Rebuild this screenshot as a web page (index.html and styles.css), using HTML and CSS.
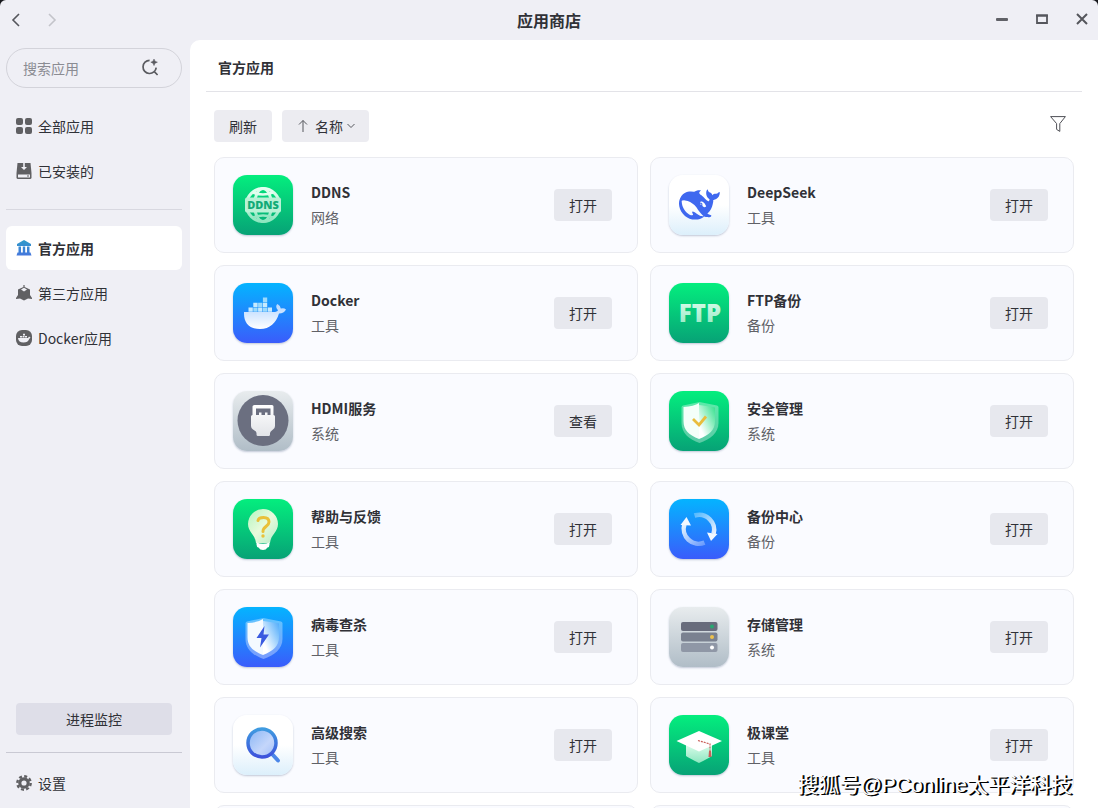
FILE: index.html
```html
<!DOCTYPE html>
<html lang="zh-CN">
<head>
    <meta charset="UTF-8">
    <meta name="viewport" content="width=device-width, initial-scale=1.0">
    <title>应用商店</title>
    <link rel="stylesheet" href="styles.css">
</head>
<body>
    <!-- shared gradients -->
    <svg class="defs" width="0" height="0" aria-hidden="true">
        <defs>
            <linearGradient id="mint" x1="0" y1="0" x2="0" y2="1">
                <stop offset="0" stop-color="#e4fff0"/>
                <stop offset="1" stop-color="#8ee6c0"/>
            </linearGradient>
            <linearGradient id="whale" x1="0" y1="0" x2="0" y2="1">
                <stop offset="0" stop-color="#b5d6ff"/>
                <stop offset="1" stop-color="#ffffff"/>
            </linearGradient>
            <linearGradient id="plug" x1="0" y1="0" x2="0" y2="1">
                <stop offset="0" stop-color="#ffffff"/>
                <stop offset="1" stop-color="#e2e4e8"/>
            </linearGradient>
            <linearGradient id="bulb" x1="0" y1="0" x2="1" y2="1">
                <stop offset="0" stop-color="#b4f5c0"/>
                <stop offset="0.5" stop-color="#e8fbdc"/>
                <stop offset="1" stop-color="#b5ecc9"/>
            </linearGradient>
            <linearGradient id="greenHalf" x1="0" y1="1" x2="1" y2="0">
                <stop offset="0.2" stop-color="#ffffff"/>
                <stop offset="1" stop-color="#32e08c"/>
            </linearGradient>
            <linearGradient id="blueHalf" x1="0" y1="1" x2="1" y2="0">
                <stop offset="0.2" stop-color="#ffffff"/>
                <stop offset="1" stop-color="#4aa9fb"/>
            </linearGradient>
            <linearGradient id="ring" x1="0" y1="0" x2="0" y2="1">
                <stop offset="0" stop-color="#3f9be0"/>
                <stop offset="1" stop-color="#3d52dc"/>
            </linearGradient>
            <linearGradient id="lens" x1="0" y1="0" x2="1" y2="1">
                <stop offset="0" stop-color="#86b4f5"/>
                <stop offset="0.6" stop-color="#c4d6fb"/>
                <stop offset="1" stop-color="#9fbdf8"/>
            </linearGradient>
            <linearGradient id="arcRight" x1="0" y1="0" x2="1" y2="1">
                <stop offset="0" stop-color="#ffffff" stop-opacity="0.3"/>
                <stop offset="1" stop-color="#ffffff" stop-opacity="0.9"/>
            </linearGradient>
            <linearGradient id="arcLeft" x1="1" y1="1" x2="0" y2="0">
                <stop offset="0" stop-color="#ffffff" stop-opacity="0.3"/>
                <stop offset="1" stop-color="#ffffff" stop-opacity="0.9"/>
            </linearGradient>
            <linearGradient id="bank" x1="0" y1="0" x2="0" y2="1">
                <stop offset="0" stop-color="#2f9bc9"/>
                <stop offset="1" stop-color="#4577dd"/>
            </linearGradient>
        </defs>
    </svg>

    <div class="window">
        <header class="titlebar">
            <div class="history">
                <button class="icon-btn" aria-label="后退">
                    <svg width="16" height="16" viewBox="0 0 16 16" fill="none" stroke="#55565c" stroke-width="1.6"><path d="M11 2L5 8L11 14"/></svg>
                </button>
                <button class="icon-btn" aria-label="前进">
                    <svg width="16" height="16" viewBox="0 0 16 16" fill="none" stroke="#c3c4ca" stroke-width="1.6"><path d="M5 2L11 8L5 14"/></svg>
                </button>
            </div>
            <h1>应用商店</h1>
            <div class="window-controls">
                <button class="icon-btn" aria-label="最小化">
                    <svg width="16" height="16" viewBox="0 0 16 16"><rect x="2" y="6" width="12" height="3" rx="1" fill="#606167"/></svg>
                </button>
                <button class="icon-btn" aria-label="最大化">
                    <svg width="16" height="16" viewBox="0 0 16 16" fill="none" stroke="#55565c"><path d="M3 3V11H13V3" stroke-width="1.800"/><path d="M2.100 3.500H13.900" stroke-width="2.400"/></svg>
                </button>
                <button class="icon-btn" aria-label="关闭">
                    <svg width="16" height="16" viewBox="0 0 16 16" fill="none" stroke="#55565c" stroke-width="2"><path d="M3 2L13 12M13 2L3 12"/></svg>
                </button>
            </div>
        </header>

        <aside class="sidebar">
            <div class="search">
                <input type="text" placeholder="搜索应用" aria-label="搜索应用">
                <svg width="18" height="18" viewBox="0 0 18 18" fill="none" stroke="#5a5b60" stroke-width="1.7"><path d="M8.600 1.300A6.600 6.600 0 1 0 15.200 8.600M12.800 12.200L16.600 16"/><path d="M13 0L14 2.200L16.400 3.200L14 4.200L13 6.600L12 4.200L9.800 3.200L12 2.200Z" fill="#5a5b60" stroke="#5a5b60" stroke-width=".5"/></svg>
            </div>

            <nav>
                <a href="#" class="nav-item">
                    <svg width="16" height="16" viewBox="0 0 16 16" fill="#606063"><rect width="7" height="7" rx="2"/><rect x="9" width="7" height="7" rx="2"/><rect y="9" width="7" height="7" rx="2"/><rect x="9" y="9" width="7" height="7" rx="2"/></svg>
                    全部应用
                </a>
                <a href="#" class="nav-item">
                    <svg width="16" height="16" viewBox="0 0 16 16"><path d="M1.5 0H14.5L15.5 10V14.5Q15.5 16 14 16H2Q.5 16 .5 14.5V10Z" fill="#606063"/><path d="M7.2 0H8.8V4H11L8 7L5 4H7.2Z" fill="#f0f0f6"/><path d="M2 11.5H14V14.5H2Z" fill="#f0f0f6"/><rect x="11" y="12.5" width="2" height="1" fill="#606063"/></svg>
                    已安装的
                </a>
                <hr>
                <a href="#" class="nav-item active">
                    <svg width="16" height="16" viewBox="0 0 16 16" fill="url(#bank)"><path d="M8 0L15 4V6H1V4ZM2.5 6.5H5V13H2.5ZM6.8 6.5H9.2V13H6.8ZM11 6.5H13.5V13H11ZM1.5 12.6H14.5L15.5 15.5H.5Z"/></svg>
                    官方应用
                </a>
                <a href="#" class="nav-item">
                    <svg width="16" height="16" viewBox="0 0 16 16"><path d="M7.4 0H8.6V2L14 4.5V10L16 13V14L12 13.4L8 15.6L4 13.4L0 14V13L2 10V4.5L7.4 2Z" fill="#606063"/><path d="M8 2.8L11 4.6L8 6.4L5 4.6Z" fill="#efeff5"/></svg>
                    第三方应用
                </a>
                <a href="#" class="nav-item">
                    <svg width="16" height="16" viewBox="0 0 16 16"><rect width="16" height="16" rx="6" fill="#606063"/><path d="M2 8H12L13 6.5L14.5 7.5L13.2 9Q12 12.5 7.5 12.5Q2.5 12.5 2 8ZM4 6H6V7.4H4ZM6.5 6H8.5V7.4H6.5ZM9 6H11V7.4H9ZM7 3.8H9V5.5H7Z" fill="#f0f0f6"/></svg>
                    Docker应用
                </a>
            </nav>

            <div class="sidebar-bottom">
                <button class="monitor-btn">进程监控</button>
                <hr>
                <a href="#" class="nav-item">
                    <svg width="16" height="16" viewBox="0 0 16 16" fill="none" stroke="#606063"><circle cx="8" cy="8" r="4.2" stroke-width="3.2"/><circle cx="8" cy="8" r="6.7" stroke-width="2.4" stroke-dasharray="3 2.26"/></svg>
                    设置
                </a>
            </div>
        </aside>

        <main class="content">
            <h2>官方应用</h2>
            <div class="toolbar">
                <button class="tool-btn">刷新</button>
                <div class="sort">
                    <svg width="12" height="14" viewBox="0 0 12 14" fill="none" stroke="#55565c"><path d="M6 13V1.5M2 5.5L6 1.5L10 5.5"/></svg>
                    <select aria-label="排序">
                        <option>名称</option>
                    </select>
                    <svg width="8" height="8" viewBox="0 0 8 8" fill="none" stroke="#55565c"><path d="M.5 2L4 5.5L7.500 2"/></svg>
                </div>
                <button class="icon-btn filter" aria-label="筛选">
                    <svg width="16" height="16" viewBox="0 0 16 16" fill="none" stroke="#4e4f55" stroke-linejoin="round"><path d="M.6 .6H15.400L9.800 7.600V15.400L6.600 13.400V7.600Z"/></svg>
                </button>
            </div>

            <ul class="apps">
                <li class="card">
                    <svg class="app-icon green" viewBox="0 0 60 60">
                        <g fill="none" stroke="url(#mint)" stroke-width="3"><circle cx="30" cy="30" r="16.500"/><ellipse cx="30" cy="30" rx="8.500" ry="16.500"/><path d="M20 17.500Q30 21.500 40 17.500M20 42.500Q30 38.500 40 42.500" stroke-width="2.500"/></g>
                        <rect x="12" y="22.500" width="36" height="15" rx="2" fill="#b8f2d6"/>
                        <text class="ddns-text" x="30" y="34" text-anchor="middle">DDNS</text>
                    </svg>
                    <div class="info"><h3>DDNS</h3><p>网络</p></div>
                    <button class="open-btn">打开</button>
                </li>
                <li class="card">
                    <svg class="app-icon white" viewBox="0 0 60 60">
                        <path transform="translate(10 9.500) scale(1.700)" fill="#3f68ef" d="M23.748 4.482c-.254-.124-.364.113-.512.234-.051.039-.094.09-.137.136-.372.397-.806.657-1.373.626-.829-.046-1.537.214-2.163.848-.133-.782-.575-1.248-1.247-1.548-.352-.156-.708-.311-.955-.65-.172-.241-.219-.51-.305-.774-.055-.16-.11-.323-.293-.35-.2-.031-.278.136-.356.276-.313.572-.434 1.202-.422 1.84.027 1.436.633 2.58 1.838 3.393.137.093.172.187.129.323-.082.28-.18.552-.266.833-.055.179-.137.217-.329.14a5.526 5.526 0 01-1.736-1.18c-.857-.828-1.631-1.742-2.597-2.458a11.365 11.365 0 00-.689-.471c-.985-.957.13-1.743.388-1.836.27-.098.093-.432-.779-.428-.872.004-1.67.295-2.687.684a3.055 3.055 0 01-.465.137 9.597 9.597 0 00-2.883-.102c-1.885.21-3.39 1.102-4.497 2.623C.082 8.606-.231 10.684.152 12.85c.403 2.284 1.569 4.175 3.36 5.653 1.858 1.533 3.997 2.284 6.438 2.14 1.482-.085 3.133-.284 4.994-1.86.47.234.962.327 1.78.397.63.059 1.236-.03 1.705-.128.735-.156.684-.837.419-.961-2.155-1.004-1.682-.595-2.113-.926 1.096-1.296 2.746-2.642 3.392-7.003.05-.347.007-.565 0-.845-.004-.17.035-.237.23-.256a4.173 4.173 0 001.545-.475c1.396-.763 1.96-2.015 2.093-3.517.02-.23-.004-.467-.247-.588zM11.581 18c-2.089-1.642-3.102-2.183-3.52-2.16-.392.024-.321.471-.235.763.09.288.207.486.371.739.114.167.192.416-.113.603-.673.416-1.842-.14-1.897-.167-1.361-.802-2.5-1.86-3.301-3.307-.774-1.393-1.224-2.887-1.298-4.482-.02-.386.093-.522.477-.592a4.696 4.696 0 011.529-.039c2.132.312 3.946 1.265 5.468 2.774.868.86 1.525 1.887 2.202 2.891.72 1.066 1.494 2.082 2.48 2.914.348.292.625.514.891.677-.802.09-2.14.11-3.054-.614zm1-6.44a.306.306 0 01.415-.287.302.302 0 01.2.288.306.306 0 01-.31.307.303.303 0 01-.304-.308zm3.11 1.596c-.2.081-.399.151-.59.16a1.245 1.245 0 01-.798-.254c-.274-.23-.47-.358-.552-.758a1.73 1.73 0 01.016-.588c.07-.327-.008-.537-.239-.727-.187-.156-.426-.199-.688-.199a.559.559 0 01-.254-.078.253.253 0 01-.114-.358c.028-.054.16-.186.192-.21.356-.202.767-.136 1.146.016.352.144.618.408 1.001.782.391.451.462.576.685.914.176.265.336.537.445.848.067.195-.019.354-.25.452z"/>
                    </svg>
                    <div class="info"><h3>DeepSeek</h3><p>工具</p></div>
                    <button class="open-btn">打开</button>
                </li>
                <li class="card">
                    <svg class="app-icon blue" viewBox="0 0 60 60">
                        <path fill="#c6eafe" d="M15.500 24.500h4.300v4.300h-4.300zM20.300 19.700h4.300v4.300h-4.300zM25.100 24.500h4.300v4.300h-4.300zM29.900 19.700h4.300v4.300h-4.300zM34.700 24.500h4.300v4.300h-4.300z"/>
                        <path fill="#9bdafc" d="M20.300 24.500h4.300v4.300h-4.300zM25.100 19.700h4.300v4.300h-4.300zM29.900 14.500h4.300v4.700h-4.300zM29.900 24.500h4.300v4.300h-4.300z"/>
                        <path fill="url(#whale)" d="M11 29H40Q44.500 29 45 27C42.500 24.500 43 22 44.500 21Q47.500 22.500 47.800 25.500Q51 24.500 53 26.500Q51 30.500 46 30.500C43 40 37 46 27 46C16 46 10.500 40 11 29Z"/>
                    </svg>
                    <div class="info"><h3>Docker</h3><p>工具</p></div>
                    <button class="open-btn">打开</button>
                </li>
                <li class="card">
                    <svg class="app-icon green" viewBox="0 0 60 60">
                        <text class="ftp-text" x="31" y="39" text-anchor="middle" fill="url(#mint)">FTP</text>
                    </svg>
                    <div class="info"><h3>FTP备份</h3><p>备份</p></div>
                    <button class="open-btn">打开</button>
                </li>
                <li class="card">
                    <svg class="app-icon silver" viewBox="0 0 60 60">
                        <circle cx="30" cy="29.500" r="25.500" fill="#6b6f80"/>
                        <path fill="url(#plug)" d="M21.500 14H39Q40.500 14 40.500 15.500V24Q42 24 42 25.500V35Q42 37 40 38.500Q37 40.500 37 42V43.500Q37 45 35.500 45H25Q23.500 45 23.500 43.500V42Q23.500 40.500 20 38.500Q18 37 18 35V25.500Q18 24 19.500 24V15.500Q19.500 14 21.500 14Z"/>
                        <path fill="#6b6f80" d="M23 17.500H37.500V24H34.500V21.500H32V24H28.500V21.500H26V24H23Z"/>
                    </svg>
                    <div class="info"><h3>HDMI服务</h3><p>系统</p></div>
                    <button class="open-btn">查看</button>
                </li>
                <li class="card">
                    <svg class="app-icon green" viewBox="0 0 60 60">
                        <path fill="#ffffff" fill-opacity="0.350" d="M30.500 11L48 14.500Q49.500 15 49.500 16.500V32C49.500 42 41 48.500 30.500 52C20 48.500 12.500 42 12.500 32V16.500Q12.500 15 14 14.500Z"/>
                        <path fill="url(#greenHalf)" d="M30 14V48C40 44 46 39.500 46 30V16.500L34 14.500Z"/>
                        <path fill="#f4fff9" d="M30 12V48C20 44 14.500 39.500 14.500 30V16Q25 15.500 30 12Z"/>
                        <path fill="none" stroke="#e9bd3d" stroke-width="2.800" d="M24 28L30 34L37 25.500"/>
                    </svg>
                    <div class="info"><h3>安全管理</h3><p>系统</p></div>
                    <button class="open-btn">打开</button>
                </li>
                <li class="card">
                    <svg class="app-icon green" viewBox="0 0 60 60">
                        <path fill="url(#bulb)" d="M30 10A15 15 0 0 1 45 25C45 33 38 35 37 44H23C22 35 15 33 15 25A15 15 0 0 1 30 10Z"/>
                        <path fill="#ffffff" d="M23.500 43.500Q30 46 36.500 43.500V45.500Q36.500 48 34.500 48.500Q33 51 30 51Q27 51 25.500 48.500Q23.500 48 23.500 45.500Z"/>
                        <path fill="none" stroke="#e9c13a" stroke-width="3" stroke-linecap="round" d="M25 21.500Q25.500 18.500 30.500 18.500Q36 18.500 36 23C36 27.500 30 27 30 32.500"/>
                        <circle cx="30" cy="37" r="1.700" fill="#e9c13a"/>
                    </svg>
                    <div class="info"><h3>帮助与反馈</h3><p>工具</p></div>
                    <button class="open-btn">打开</button>
                </li>
                <li class="card">
                    <svg class="app-icon blue" viewBox="0 0 60 60">
                        <path fill="none" stroke="url(#arcRight)" stroke-width="4.500" d="M25.500 16.500A15 15 0 0 1 44.500 35"/>
                        <path fill="none" stroke="url(#arcLeft)" stroke-width="4.500" d="M35.500 43.600A15 15 0 0 1 15.500 25"/>
                        <path fill="#f2f8ff" d="M38 33.500L48.500 35L42 42ZM11.500 26L17.500 18L22 26.500Z"/>
                    </svg>
                    <div class="info"><h3>备份中心</h3><p>备份</p></div>
                    <button class="open-btn">打开</button>
                </li>
                <li class="card">
                    <svg class="app-icon blue" viewBox="0 0 60 60">
                        <path fill="#ffffff" fill-opacity="0.350" d="M30.500 11L48 14.500Q49.500 15 49.500 16.500V32C49.500 42 41 48.500 30.500 52C20 48.500 12.500 42 12.500 32V16.500Q12.500 15 14 14.500Z"/>
                        <path fill="url(#blueHalf)" d="M30 14V48C40 44 46 39.500 46 30V16.500L34 14.500Z"/>
                        <path fill="#f4faff" d="M30 12V48C20 44 14.500 39.500 14.500 30V16Q25 15.500 30 12Z"/>
                        <path fill="#3a5be0" d="M31.500 19L23.500 31H28.500L27 40.500L36 27.500H30.500Z"/>
                    </svg>
                    <div class="info"><h3>病毒查杀</h3><p>工具</p></div>
                    <button class="open-btn">打开</button>
                </li>
                <li class="card">
                    <svg class="app-icon silver" viewBox="0 0 60 60">
                        <rect x="12" y="15" width="36.500" height="9" rx="2" fill="#686c7c"/>
                        <rect x="12" y="25.500" width="36.500" height="9" rx="2" fill="#7a8190"/>
                        <rect x="12" y="36" width="36.500" height="9" rx="2" fill="#8f97a6"/>
                        <circle cx="43" cy="19.500" r="2" fill="#27a871"/>
                        <circle cx="43" cy="30" r="2" fill="#ecc14d"/>
                        <circle cx="43" cy="40.500" r="2" fill="#ffffff"/>
                    </svg>
                    <div class="info"><h3>存储管理</h3><p>系统</p></div>
                    <button class="open-btn">打开</button>
                </li>
                <li class="card">
                    <svg class="app-icon white" viewBox="0 0 60 60">
                        <path fill="none" stroke="#4b86e8" stroke-width="4" stroke-linecap="round" d="M39.500 39.500L45 45.500"/>
                        <circle cx="29" cy="28" r="14" fill="url(#lens)" stroke="url(#ring)" stroke-width="3.500"/>
                    </svg>
                    <div class="info"><h3>高级搜索</h3><p>工具</p></div>
                    <button class="open-btn">打开</button>
                </li>
                <li class="card">
                    <svg class="app-icon green" viewBox="0 0 60 60">
                        <path fill="url(#mint)" d="M17 27L30 31L43 27V41Q40 43 30 48Q20 43 17 41Z"/>
                        <path fill="#ffffff" d="M30 16L53 26L30 36.500L7.500 26Z"/>
                        <path fill="none" stroke="#c9605a" stroke-width="1.200" stroke-dasharray="2 1" d="M29 25.500L41 29V39"/>
                        <path fill="#c9605a" d="M40 36H42L42.500 42H39.500Z"/>
                    </svg>
                    <div class="info"><h3>极课堂</h3><p>工具</p></div>
                    <button class="open-btn">打开</button>
                </li>
                <li class="card"></li>
                <li class="card"></li>
            </ul>
        </main>
    </div>
    <div class="watermark">搜狐号@PConline太平洋科技</div>
</body>
</html>
```
FILE: styles.css
```css
* {
    box-sizing: border-box;
}
body {
    margin: 0;
    background: #17181c;
    font-family: "Noto Sans CJK SC", "Noto Sans", sans-serif;
    font-size: 14px;
    line-height: 20px;
    color: #303137;
    overflow: hidden;
}
h1, h2, h3, p, ul {
    margin: 0;
    padding: 0;
}
button, input, select {
    font: inherit;
    color: inherit;
    border: none;
    padding: 0;
}
button {
    cursor: pointer;
}
svg {
    flex-shrink: 0;
}
.defs {
    position: absolute;
}
.window {
    display: grid;
    grid-template-columns: 190px 1fr;
    grid-template-rows: 40px 1fr;
    height: 100vh;
    background: #efeff5;
    border-radius: 6px 6px 0 0;
    overflow: hidden;
}

/* title bar */
.titlebar {
    grid-column: 1 / -1;
    display: grid;
    grid-template-columns: 1fr auto 1fr;
    align-items: center;
    padding: 0 8px;
}
.titlebar h1 {
    font-size: 16px;
    line-height: 24px;
    font-weight: 700;
}
.icon-btn {
    display: flex;
    background: none;
}
.history {
    display: flex;
    gap: 20px;
}
.window-controls {
    display: flex;
    justify-content: flex-end;
    gap: 24px;
}

/* sidebar */
.sidebar {
    display: flex;
    flex-direction: column;
    padding: 8px 8px 3px 6px;
}
.search {
    display: flex;
    align-items: center;
    height: 40px;
    padding: 0 22px 0 16px;
    margin-bottom: 16px;
    border: 1px solid #d3d3da;
    border-radius: 20px;
}
.search input {
    flex: 1;
    min-width: 0;
    background: none;
    outline: none;
}
.search input::placeholder {
    color: #8b8c93;
}
nav {
    display: flex;
    flex-direction: column;
    gap: 1px;
}
hr {
    width: 100%;
    margin: 15px 0;
    border: none;
    border-top: 1px solid #d8d8e0;
}
.nav-item {
    display: flex;
    align-items: center;
    gap: 6px;
    height: 44px;
    padding: 0 10px;
    border-radius: 6px;
    color: inherit;
    text-decoration: none;
}
.nav-item.active {
    background: #fff;
    font-weight: 700;
}
.sidebar-bottom {
    display: flex;
    flex-direction: column;
    margin-top: auto;
}
.sidebar-bottom hr {
    margin: 17px 0 8px;
    border-color: #c9c9d3;
}
.monitor-btn {
    height: 32px;
    margin: 0 10px;
    background: #dedee8;
    border-radius: 4px;
}

/* content */
.content {
    display: flex;
    flex-direction: column;
    min-height: 0;
    background: #fff;
    border-radius: 10px 0 0 0;
    overflow: hidden;
}
.content h2 {
    flex-shrink: 0;
    height: 52px;
    margin: 0 16px;
    padding: 17px 12px 0;
    font-size: 14px;
    line-height: 20px;
    font-weight: 700;
    border-bottom: 1px solid #e3e3e8;
}
.toolbar {
    display: flex;
    gap: 10px;
    padding: 18px 32px 15px 24px;
}
.tool-btn, .sort {
    height: 32px;
    padding: 0 15px;
    background: #ececf1;
    border-radius: 4px;
}
.sort {
    display: flex;
    align-items: center;
    padding-right: 14px;
}
.sort select {
    appearance: none;
    width: 28px;
    height: 20px;
    margin: 0 4px 0 6px;
    background: none;
    outline: none;
}
.filter {
    align-self: flex-start;
    margin: 6px 0 0 auto;
}
.apps {
    display: grid;
    grid-template-columns: 1fr 1fr;
    grid-auto-rows: 96px;
    gap: 12px;
    padding: 0 24px;
    list-style: none;
}
.card {
    display: flex;
    align-items: center;
    gap: 18px;
    padding: 0 25px 0 18px;
    background: #fafbff;
    border: 1px solid #eaebf0;
    border-radius: 10px;
}
.app-icon {
    width: 60px;
    height: 60px;
    border-radius: 14px;
    box-shadow: 0 1px 2px rgba(60, 80, 120, 0.3);
}
.green {
    background: linear-gradient(#04ee7e, #07a276);
}
.blue {
    background: linear-gradient(#04b4ff, #3a5cfb);
}
.silver {
    background: linear-gradient(#e8ecee, #b0bdc7);
}
.white {
    background: linear-gradient(#fff 50%, #dceffb);
}
.ddns-text {
    font: 800 11px "Open Sans", sans-serif;
    fill: #12ab77;
}
.ftp-text {
    font: 800 24px "Open Sans", sans-serif;
}
.info {
    flex: 1;
    padding-bottom: 2px;
}
.info h3 {
    font-size: 14px;
    line-height: 20px;
    font-weight: 700;
    margin-bottom: 5px;
}
.info p {
    color: #606167;
}
.open-btn {
    width: 58px;
    height: 32px;
    background: #e7e8ee;
    border-radius: 4px;
}
.watermark {
    position: absolute;
    right: 26px;
    bottom: 8px;
    font: 21px/30px "Liberation Sans", "Noto Sans CJK SC", sans-serif;
    color: #fff;
    text-shadow: 1px 1px 0 #000, 2px 1px 0 #000;
}
```
